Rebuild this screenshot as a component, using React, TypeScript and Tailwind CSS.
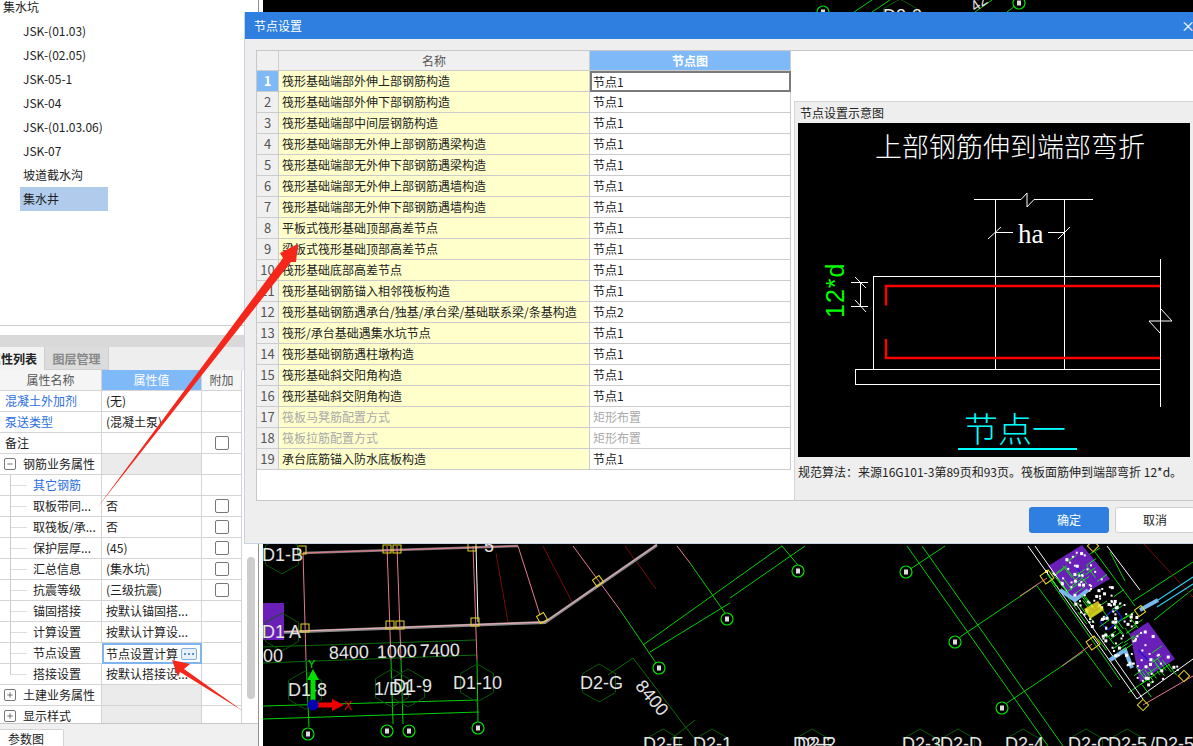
import { Minus, Plus } from "lucide-react";

const treeItems = ["JSK-(01.03)", "JSK-(02.05)", "JSK-05-1", "JSK-04", "JSK-(01.03.06)", "JSK-07", "坡道截水沟", "集水井"];

type PropRow = {
  name: string;
  value?: string;
  kind?: "link" | "group" | "child" | "last";
  open?: boolean;
  check?: boolean;
  blue?: boolean;
  active?: boolean;
};

const propRows: PropRow[] = [
  { name: "混凝土外加剂", value: "(无)", kind: "link" },
  { name: "泵送类型", value: "(混凝土泵)", kind: "link" },
  { name: "备注", check: true },
  { name: "钢筋业务属性", kind: "group", open: true },
  { name: "其它钢筋", kind: "child", blue: true },
  { name: "取板带同...", value: "否", kind: "child", check: true },
  { name: "取筏板/承...", value: "否", kind: "child", check: true },
  { name: "保护层厚...", value: "(45)", kind: "child", check: true },
  { name: "汇总信息", value: "(集水坑)", kind: "child", check: true },
  { name: "抗震等级", value: "(三级抗震)", kind: "child", check: true },
  { name: "锚固搭接", value: "按默认锚固搭...", kind: "child" },
  { name: "计算设置", value: "按默认计算设...", kind: "child" },
  { name: "节点设置", value: "节点设置计算", kind: "child", active: true },
  { name: "搭接设置", value: "按默认搭接设...", kind: "last" },
  { name: "土建业务属性", kind: "group" },
  { name: "显示样式", kind: "group" },
];

const nodeRows = [
  "筏形基础端部外伸上部钢筋构造",
  "筏形基础端部外伸下部钢筋构造",
  "筏形基础端部中间层钢筋构造",
  "筏形基础端部无外伸上部钢筋遇梁构造",
  "筏形基础端部无外伸下部钢筋遇梁构造",
  "筏形基础端部无外伸上部钢筋遇墙构造",
  "筏形基础端部无外伸下部钢筋遇墙构造",
  "平板式筏形基础顶部高差节点",
  "梁板式筏形基础顶部高差节点",
  "筏形基础底部高差节点",
  "筏形基础钢筋锚入相邻筏板构造",
  "筏形基础钢筋遇承台/独基/承台梁/基础联系梁/条基构造",
  "筏形/承台基础遇集水坑节点",
  "筏形基础钢筋遇柱墩构造",
  "筏形基础斜交阳角构造",
  "筏形基础斜交阴角构造",
  "筏板马凳筋配置方式",
  "筏板拉筋配置方式",
  "承台底筋锚入防水底板构造",
];

function Checkbox() {
  return <span className="block h-[14px] w-[14px] rounded-[2px] border border-[#777777] bg-white" />;
}

function PropertyRow({ row }: { row: PropRow }) {
  const isChild = row.kind === "child" || row.kind === "last";
  return (
    <div className="grid h-[21px] shrink-0 grid-cols-[102px_100px_40px] text-[12px] leading-[20px] text-[#222222]">
      <div className={`flex items-center overflow-hidden border-b border-[#d4d4d4] whitespace-nowrap ${row.active ? "" : "border-r"}`}>
        {row.kind === "group" && (
          <span className="mr-[7px] ml-[4px] flex h-[12px] w-[12px] items-center justify-center rounded-[2px] border border-[#777777]">
            {row.open ? <Minus size={8} strokeWidth={2} color="#333" /> : <Plus size={8} strokeWidth={2} color="#333" />}
          </span>
        )}
        {isChild && (
          <span className={`mr-[6px] ml-[10px] flex w-[17px] items-center border-l border-[#cccccc] ${row.kind === "last" ? "h-[11px] self-start" : "h-[21px]"}`}>
            <span className={`h-px w-full bg-[#dddddd] ${row.kind === "last" ? "mt-[10px]" : ""}`} />
          </span>
        )}
        <span className={`${!row.kind ? "pl-[5px]" : ""} ${row.kind === "link" ? "pl-[5px] text-[#2b6fe0]" : ""} ${row.blue ? "text-[#2b6fe0]" : ""}`}>{row.name}</span>
      </div>
      <div className={`flex items-center overflow-hidden whitespace-nowrap ${row.kind === "group" ? "bg-[#ebebeb]" : ""} ${row.active ? "border-2 border-[#7fb5ef] pl-[2px]" : "border-r border-b border-[#d4d4d4] pl-[4px]"}`}>
        <span>{row.value}</span>
        {row.active && (
          <span className="ml-[3px] flex h-[12px] w-[16px] shrink-0 items-center justify-center gap-[2px] rounded-[2px] border border-[#7fb0e4] bg-[#e8f1fb]">
            <span className="h-[2px] w-[2px] bg-[#5a93d4]" />
            <span className="h-[2px] w-[2px] bg-[#5a93d4]" />
            <span className="h-[2px] w-[2px] bg-[#5a93d4]" />
          </span>
        )}
      </div>
      <div className="flex items-center justify-center border-r border-b border-[#d4d4d4]">{row.check && <Checkbox />}</div>
    </div>
  );
}

function LeftPanel() {
  return (
    <div className="flex h-[746px] w-[258px] shrink-0 flex-col bg-white text-[#222222]">
      <div className="h-[335px] text-[12px] leading-[24px]">
        <div className="h-[331px] border-b border-[#cfcfcf]">
          <div className="-mt-[5px] pl-[3px]">集水坑</div>
          <div className="pl-[20px]">
            {treeItems.map((item) => (
              <div key={item} className={`h-[24px] w-[88px] pl-[3px] ${item === "集水井" ? "bg-[#b0cbec]" : ""}`}>
                {item}
              </div>
            ))}
          </div>
        </div>
      </div>
      <div className="h-[12px] bg-[#d9d9d9]" />
      <div className="flex h-[23px] overflow-hidden bg-[#eeeeee] text-[12px] leading-[22px]">
        <div className="w-[45px] shrink-0 overflow-hidden border-r border-[#cfcfcf] bg-[#f3f3f3] font-bold">
          <div className="-ml-[11px] w-[60px] pt-px">属性列表</div>
        </div>
        <div className="w-[64px] shrink-0 border-r border-b border-[#cfcfcf] bg-[#dcdcdc] pt-px text-center font-bold text-[#888888]">图层管理</div>
      </div>
      <div className="flex h-[354px] overflow-hidden border-b border-[#c8c8c8]">
        <div className="w-[242px] shrink-0">
          <div className="grid h-[21px] grid-cols-[102px_100px_40px] text-center text-[12px] leading-[20px] text-[#555555]">
            <div className="border-r border-b border-[#d4d4d4] bg-[#f5f5f5]">属性名称</div>
            <div className="border-r border-b border-[#d4d4d4] bg-[#7fb9f7] text-white">属性值</div>
            <div className="border-r border-b border-[#d4d4d4] bg-[#f5f5f5]">附加</div>
          </div>
          {propRows.map((row) => (
            <PropertyRow key={row.name} row={row} />
          ))}
        </div>
        <div className="w-[16px] pt-[187px] pl-[5px]">
          <div className="h-[142px] w-[8px] rounded-[4px] bg-[#cdcdcd]" />
        </div>
      </div>
      <div className="flex flex-1 items-end bg-[#f0f0f0]">
        <div className="h-[17px] w-[64px] rounded-tr-[2px] border-t border-r border-[#d4d4d4] bg-white pl-[8px] text-[12px] leading-[17px]">参数图</div>
      </div>
    </div>
  );
}

function DetailDrawing() {
  return (
    <svg viewBox="798 123 392 334" className="h-[334px] w-[392px] bg-black">
      <text x="875" y="157" fill="#ffffff" fontSize="27" fontWeight="300" fontFamily="'Noto Sans CJK SC', sans-serif">上部钢筋伸到端部弯折</text>
      <g stroke="#ffffff" strokeWidth="1" fill="none" shapeRendering="crispEdges">
        <path d="M974 199.5H1021M1034 199.5H1093" />
        <path d="M995.5 199V369M1064.5 199V369M1160.5 259V407" />
        <path d="M873 276.5H1160M873.5 276V369M855 369.5H1160M855 384.5H1160M855.5 369V384" />
        <path d="M995 232.5H1013M1048 232.5H1064" />
        <path d="M851 282.5H868M851 306.5H868M860.5 282V306" />
      </g>
      <g stroke="#ffffff" strokeWidth="1" fill="none">
        <path d="M1021 199.5L1027 193V207L1034 199.5" />
        <path d="M988 239L1001 227M1058 239L1070 227" />
        <path d="M855 277L866 288M855 300L866 312" />
        <path d="M1161 309L1172 321H1149L1160 333" />
      </g>
      <text x="1018" y="243" fill="#ffffff" fontSize="27" fontFamily="'Liberation Serif', serif">ha</text>
      <text transform="translate(844 318) rotate(-90)" fill="#00ff00" fontSize="25" letterSpacing="1" fontFamily="'Liberation Sans', sans-serif">12*d</text>
      <path d="M886 305.5V286H1160M886 339V358H1160" stroke="#ff0000" strokeWidth="2.4" fill="none" />
      <text x="964" y="442" fill="#00ffff" fontSize="34" fontWeight="300" fontFamily="'Noto Sans CJK SC', sans-serif">节点一</text>
      <path d="M958 449H1077" stroke="#00ffff" strokeWidth="2" />
    </svg>
  );
}

function NodeDialog() {
  return (
    <div className="absolute top-[12px] left-[244px] flex h-[532px] w-[949px] flex-col border-b border-l border-[#c9d3e3] bg-[#eeeeee] text-[12px]">
      <div className="relative flex h-[27px] shrink-0 items-center bg-[#2e7fe0] pl-[9px] text-white">
        节点设置
        <span className="absolute top-[5px] right-[-2px] text-[14px] leading-[16px]">×</span>
      </div>
      <div className="mt-[11px] ml-[11px] flex h-[451px] shrink-0 border-t border-b border-l border-[#c8c8c8] bg-white">
        <div className="w-[534px] shrink-0">
          <div className="grid h-[20px] grid-cols-[22px_311px_201px] text-center leading-[19px] text-[#555555]">
            <div className="border-r border-b border-[#cccccc] bg-[#f0f0f0]" />
            <div className="border-r border-b border-[#cccccc] bg-[#f0f0f0]">名称</div>
            <div className="border-r border-b border-[#cccccc] bg-[#7fb9f7] font-bold text-white">节点图</div>
          </div>
          {nodeRows.map((name, i) => (
            <div key={name} className="grid h-[21px] grid-cols-[22px_311px_201px] leading-[20px]">
              <div className={`border-r border-b border-[#cccccc] text-center text-[13px] ${i === 0 ? "bg-[#7fb9f7] font-bold text-white" : "bg-[#f0f0f0] text-[#555555]"}`}>{i + 1}</div>
              <div className={`overflow-hidden border-r border-b border-[#cccccc] bg-[#ffffcc] pl-[3px] whitespace-nowrap ${i === 16 || i === 17 ? "text-[#aaaaaa]" : "text-[#222222]"}`}>{name}</div>
              <div className={`${i === 0 ? "border-2 border-[#7a7a7a] pl-px leading-[17px] text-[#222222]" : "border-r border-b border-[#cccccc] pl-[3px]"} ${i === 16 || i === 17 ? "text-[#aaaaaa]" : "text-[#222222]"}`}>
                {i === 16 || i === 17 ? "矩形布置" : i === 11 ? "节点2" : "节点1"}
              </div>
            </div>
          ))}
        </div>
        <div className="ml-[3px] flex min-w-0 flex-1 flex-col pt-[50px]">
          <div className="flex-1 border-t border-l border-[#d4d4d4] bg-[#eeeeee] pl-[3px]">
            <div className="pl-[2px] text-[12px] leading-[21px] text-[#222222]">节点设置示意图</div>
            <DetailDrawing />
            <div className="pt-[5px] text-[12px] leading-[20px] whitespace-nowrap text-[#222222]">规范算法：来源16G101-3第89页和93页。筏板面筋伸到端部弯折 12*d。</div>
          </div>
        </div>
      </div>
      <div className="flex gap-[6px] pt-[6px] pl-[784px]">
        <div className="h-[26px] w-[80px] shrink-0 rounded-[3px] bg-[#2e7fe0] text-center leading-[26px] text-white">确定</div>
        <div className="h-[26px] w-[80px] shrink-0 rounded-[3px] border border-[#d0d0d0] bg-white text-center leading-[24px] text-[#222222]">取消</div>
      </div>
    </div>
  );
}

function Hex({ x, y, r = 19 }: { x: number; y: number; r?: number }) {
  const pts = [0, 1, 2, 3, 4, 5].map((i) => `${x + r * Math.cos(((i + 0.5) * Math.PI) / 3)},${y + r * Math.sin(((i + 0.5) * Math.PI) / 3)}`).join(" ");
  return <polygon points={pts} fill="none" stroke="#075807" strokeWidth="1" />;
}

function Axis({ x, y }: { x: number; y: number }) {
  return (
    <g>
      <circle cx={x} cy={y} r="6" fill="#000" stroke="#00e000" strokeWidth="1.2" />
      <rect x={x - 2} y={y - 2.5} width="4" height="5" fill="#dddddd" />
    </g>
  );
}

function Box({ x, y, a = 0, s = 8 }: { x: number; y: number; a?: number; s?: number }) {
  return <rect x={x - s / 2} y={y - s / 2} width={s} height={s} fill="none" stroke="#e8d820" strokeWidth="1" transform={`rotate(${a} ${x} ${y})`} />;
}

function CadCanvas() {
  const cadFont = "'Liberation Sans', sans-serif";
  const labels: [string, number, number][] = [
    ["D1-B", 262, 561], ["D1 A", 262, 638], ["00", 263, 662], ["D1-8", 288, 696], ["1/D1", 374, 695], ["D1-9", 393, 692],
    ["D1-10", 453, 689], ["D2-G", 580, 689], ["D2-F", 643, 750], ["D2-1", 693, 750], ["D2-F", 793, 750], ["D2-2", 797, 750],
    ["D2-3", 902, 750], ["D2-D", 940, 750], ["D2-4", 1005, 750], ["D2-C", 1068, 750], ["D2-5", 1108, 750], ["/D2-5", 1150, 750],
    ["5", 484, 552], ["D2-3", 883, 22],
  ];
  const hexes = [[282, 555], [282, 632], [305, 690], [392, 688], [408, 688], [477, 683], [599, 683], [663, 748], [712, 748], [812, 748], [920, 748], [958, 748], [1023, 748], [1086, 748], [1127, 748], [900, 18]];
  const dots = Array.from({ length: 150 }, (_, i) => {
    const t = (i * i * 0.0137 + i * 0.618) % 1;
    const u = (i * i * 0.0071 + i * 0.371) % 1;
    return { x: 1045 + t * 98 + u * 36, y: 570 + t * 120 - u * 22, s: i % 3 === 0 ? 3 : 2 };
  });
  const greens = Array.from({ length: 70 }, (_, i) => {
    const t = (i * i * 0.0113 + i * 0.437) % 1;
    const u = (i * i * 0.0053 + i * 0.713) % 1;
    return { x: 1047 + t * 90 + u * 34, y: 574 + t * 115 - u * 22, a: i % 2 === 0 };
  });
  return (
    <div className="min-w-0 flex-1 bg-black">
      <svg viewBox="263 0 930 746" className="block h-[746px] w-[930px]">
        <g stroke="#00d000" strokeWidth="1" fill="none">
          <path d="M854 12L872 0M872 12L890 0M1007 12L1019 3M975 12L992 0" />
          <path d="M306 660L309 727M391 660L393 724M401 660L403 724M477 660L478 722" />
          <path d="M263 706L478 700M263 719L479 712" />
          <path d="M730 583L643 645M730 603L650 652M620 610L656 663M690 563L725 613" />
          <path d="M730 583L782 546M730 598L805 546M782 546L798 565M906 572L945 546" />
          <path d="M907 546L1048 746M922 546L1063 746M960 637L1037 585M1007 703L1083 652M1037 586L1112 687M1110 552L1125 581" />
          <path d="M1133 601L1193 562M1154 620L1193 589M1128 693L1170 664M1095 552L1135 606M1050 580L1120 680M1125 628L1160 675M1060 572L1100 548" />
        </g>
        <g stroke="#0b6b0b" strokeWidth="1" fill="none">
          <path d="M263 647L476 640M263 663L477 655M633 658L608 675M633 658L700 746M695 720L670 740" />
        </g>
        <path d="M303 553L518 546" stroke="#777777" strokeWidth="2.5" fill="none" />
        <g stroke="#e87a8c" strokeWidth="1" fill="none">
          <path d="M303 553L518 546M303 553L306 660M387 546L391 660M397 546L401 660M473 546L477 660" />
          <path d="M518 546L540 615M573 546L620 610M677 546L690 563M1020 596L1047 578M1062 666L1092 644" />
          <path d="M1143 705L1193 676" />
        </g>
        <g stroke="#7a0a0a" strokeWidth="1" fill="none">
          <path d="M543 546L572 602M625 546L656 589M496 553L508 622M1144 544L1193 597" />
        </g>
        <path d="M262 633L545 622.5L657 545" stroke="#8a8a8a" strokeWidth="3" fill="none" />
        <path d="M262 632.5L545 622L657 544.5" stroke="#f4b0bc" strokeWidth="1" fill="none" />
        <path d="M476 546L478 622" stroke="#ffffff" strokeWidth="1" fill="none" />
        <path d="M1048 566L1082 545L1110 579L1073 600Z" fill="#6a1fb8" />
        <path d="M1130 634L1148 622L1175 659L1140 682Z" fill="#6a1fb8" />
        <path d="M263 603H284V640H263Z" fill="#6a1fb8" />
        <g stroke="#ffffff" strokeWidth="1" fill="none">
          <path d="M1028 546L1137 699M1035 546L1143 699M1137 699L1193 659M1107 546L1140 590" />
        </g>
        <path d="M1152 604L1193 577M1157 607L1193 584" stroke="#30c8e8" strokeWidth="1.2" fill="none" />
        <path d="M1060 590L1075 600L1088 590M1140 610L1158 600M1110 660L1125 650L1132 668" stroke="#7ab8f0" strokeWidth="4" fill="none" />
        <path d="M1075 565L1083 577M1100 622L1115 608L1122 618L1108 630ZM1138 650L1148 660" stroke="#1818e0" strokeWidth="1.2" fill="none" />
        {greens.map((g, i) => (
          <path key={i} d={g.a ? `M${g.x} ${g.y}l9 12` : `M${g.x} ${g.y}l10 -7`} stroke="#10e010" strokeWidth="1" />
        ))}
        {dots.map((d, i) => (
          <rect key={i} x={d.x} y={d.y} width={d.s} height={d.s} fill="#ffffff" />
        ))}
        <path d="M1084 609L1098 601L1104 610L1090 619Z" fill="#e8d820" opacity="0.85" />
        <Box x={302} y={550} />
        <Box x={387} y={549} />
        <Box x={397} y={549} />
        <Box x={472} y={547} />
        <Box x={305} y={628} />
        <Box x={390} y={625} />
        <Box x={400} y={625} />
        <Box x={475} y={622} />
        <Box x={542} y={618} a={-30} />
        <Box x={598} y={581} a={-35} />
        <Box x={1047} y={577} a={-35} s={10} />
        <Box x={1093} y={643} a={-35} s={10} />
        <Box x={1140} y={611} a={-35} />
        <Box x={1184} y={676} a={45} />
        <Box x={1143} y={705} a={45} />
        <Box x={1093} y={546} a={45} />
        {hexes.map(([x, y], i) => (
          <Hex key={i} x={x} y={y} />
        ))}
        {[[308, 734], [387, 731], [409, 731], [478, 728], [659, 668], [727, 619], [798, 571], [906, 572], [955, 642], [1002, 708], [823, 12], [1019, 3]].map(([x, y], i) => (
          <Axis key={i} x={x} y={y} />
        ))}
        <g fill="#e4e4e4" fontSize="18" fontFamily={cadFont}>
          {labels.map(([t, x, y], i) => (
            <text key={i} x={x} y={y}>{t}</text>
          ))}
          <text x="329" y="659" transform="rotate(-1.5 329 659)">8400</text>
          <text x="377" y="658" transform="rotate(-1.5 377 658)">1000</text>
          <text x="420" y="657" transform="rotate(-1.5 420 657)">7400</text>
          <text x="652" y="704" textAnchor="middle" transform="rotate(50 652 698)">8400</text>
          <text x="975" y="12" fontSize="15" transform="rotate(-35 975 12)">42</text>
        </g>
        <path d="M313 705V677" stroke="#00e000" strokeWidth="5" />
        <path d="M307 680L313 669L319 680Z" fill="#00e000" />
        <text x="308" y="668" fill="#00e000" fontSize="11" fontFamily={cadFont}>Y</text>
        <path d="M313 705H335" stroke="#ee0000" strokeWidth="5" />
        <path d="M332 699L344 705L332 711Z" fill="#ee0000" />
        <text x="344" y="710" fill="#ee0000" fontSize="12" fontFamily={cadFont}>X</text>
        <circle cx="313" cy="705" r="5.5" fill="#0000b0" />
      </svg>
    </div>
  );
}

export default function App() {
  return (
    <div className="relative flex h-[746px] w-[1193px] overflow-hidden bg-white font-['Noto_Sans_CJK_SC','Microsoft_YaHei',sans-serif]">
      <LeftPanel />
      <div className="w-[5px] shrink-0 border-l border-[#8f8f8f] bg-white" />
      <CadCanvas />
      <NodeDialog />
      {/* red callout arrows */}
      <svg viewBox="0 0 1193 746" className="pointer-events-none absolute inset-0 h-[746px] w-[1193px]">
        <polygon points="298,244 280,253 283,258 97,508 291,262 296,262" fill="#f5261a" />
        <polygon points="172,660 190,664 184,669 243,711 180,672 178,677" fill="#f5261a" />
      </svg>
    </div>
  );
}
